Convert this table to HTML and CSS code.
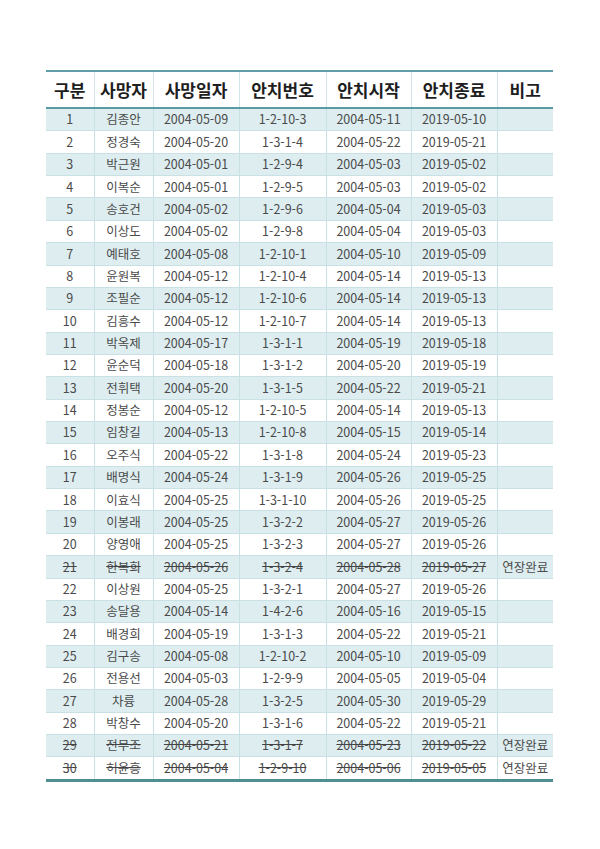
FILE: index.html
```html
<!DOCTYPE html>
<html lang="ko">
<head>
<meta charset="utf-8">
<link rel="stylesheet" href="styles.css">
</head>
<body>
<div class="page">
<table class="grid">
<colgroup>
<col class="c1"><col class="c2"><col class="c3"><col class="c4"><col class="c5"><col class="c6"><col class="c7">
</colgroup>
<thead>
<tr><th>구분</th><th>사망자</th><th>사망일자</th><th>안치번호</th><th>안치시작</th><th>안치종료</th><th>비고</th></tr>
</thead>
<tbody>
<tr><td>1</td><td>김종안</td><td>2004-05-09</td><td>1-2-10-3</td><td>2004-05-11</td><td>2019-05-10</td><td></td></tr>
<tr><td>2</td><td>정경숙</td><td>2004-05-20</td><td>1-3-1-4</td><td>2004-05-22</td><td>2019-05-21</td><td></td></tr>
<tr><td>3</td><td>박근원</td><td>2004-05-01</td><td>1-2-9-4</td><td>2004-05-03</td><td>2019-05-02</td><td></td></tr>
<tr><td>4</td><td>이복순</td><td>2004-05-01</td><td>1-2-9-5</td><td>2004-05-03</td><td>2019-05-02</td><td></td></tr>
<tr><td>5</td><td>송호건</td><td>2004-05-02</td><td>1-2-9-6</td><td>2004-05-04</td><td>2019-05-03</td><td></td></tr>
<tr><td>6</td><td>이상도</td><td>2004-05-02</td><td>1-2-9-8</td><td>2004-05-04</td><td>2019-05-03</td><td></td></tr>
<tr><td>7</td><td>예태호</td><td>2004-05-08</td><td>1-2-10-1</td><td>2004-05-10</td><td>2019-05-09</td><td></td></tr>
<tr><td>8</td><td>윤원복</td><td>2004-05-12</td><td>1-2-10-4</td><td>2004-05-14</td><td>2019-05-13</td><td></td></tr>
<tr><td>9</td><td>조필순</td><td>2004-05-12</td><td>1-2-10-6</td><td>2004-05-14</td><td>2019-05-13</td><td></td></tr>
<tr><td>10</td><td>김흥수</td><td>2004-05-12</td><td>1-2-10-7</td><td>2004-05-14</td><td>2019-05-13</td><td></td></tr>
<tr><td>11</td><td>박옥제</td><td>2004-05-17</td><td>1-3-1-1</td><td>2004-05-19</td><td>2019-05-18</td><td></td></tr>
<tr><td>12</td><td>윤순덕</td><td>2004-05-18</td><td>1-3-1-2</td><td>2004-05-20</td><td>2019-05-19</td><td></td></tr>
<tr><td>13</td><td>전휘택</td><td>2004-05-20</td><td>1-3-1-5</td><td>2004-05-22</td><td>2019-05-21</td><td></td></tr>
<tr><td>14</td><td>정봉순</td><td>2004-05-12</td><td>1-2-10-5</td><td>2004-05-14</td><td>2019-05-13</td><td></td></tr>
<tr><td>15</td><td>임창길</td><td>2004-05-13</td><td>1-2-10-8</td><td>2004-05-15</td><td>2019-05-14</td><td></td></tr>
<tr><td>16</td><td>오주식</td><td>2004-05-22</td><td>1-3-1-8</td><td>2004-05-24</td><td>2019-05-23</td><td></td></tr>
<tr><td>17</td><td>배명식</td><td>2004-05-24</td><td>1-3-1-9</td><td>2004-05-26</td><td>2019-05-25</td><td></td></tr>
<tr><td>18</td><td>이효식</td><td>2004-05-25</td><td>1-3-1-10</td><td>2004-05-26</td><td>2019-05-25</td><td></td></tr>
<tr><td>19</td><td>이봉래</td><td>2004-05-25</td><td>1-3-2-2</td><td>2004-05-27</td><td>2019-05-26</td><td></td></tr>
<tr><td>20</td><td>양영애</td><td>2004-05-25</td><td>1-3-2-3</td><td>2004-05-27</td><td>2019-05-26</td><td></td></tr>
<tr class="done"><td><s>21</s></td><td><s>한복희</s></td><td><s>2004-05-26</s></td><td><s>1-3-2-4</s></td><td><s>2004-05-28</s></td><td><s>2019-05-27</s></td><td>연장완료</td></tr>
<tr><td>22</td><td>이상원</td><td>2004-05-25</td><td>1-3-2-1</td><td>2004-05-27</td><td>2019-05-26</td><td></td></tr>
<tr><td>23</td><td>송달용</td><td>2004-05-14</td><td>1-4-2-6</td><td>2004-05-16</td><td>2019-05-15</td><td></td></tr>
<tr><td>24</td><td>배경희</td><td>2004-05-19</td><td>1-3-1-3</td><td>2004-05-22</td><td>2019-05-21</td><td></td></tr>
<tr><td>25</td><td>김구송</td><td>2004-05-08</td><td>1-2-10-2</td><td>2004-05-10</td><td>2019-05-09</td><td></td></tr>
<tr><td>26</td><td>전용선</td><td>2004-05-03</td><td>1-2-9-9</td><td>2004-05-05</td><td>2019-05-04</td><td></td></tr>
<tr><td>27</td><td>차륭</td><td>2004-05-28</td><td>1-3-2-5</td><td>2004-05-30</td><td>2019-05-29</td><td></td></tr>
<tr><td>28</td><td>박창수</td><td>2004-05-20</td><td>1-3-1-6</td><td>2004-05-22</td><td>2019-05-21</td><td></td></tr>
<tr class="done"><td><s>29</s></td><td><s>전무조</s></td><td><s>2004-05-21</s></td><td><s>1-3-1-7</s></td><td><s>2004-05-23</s></td><td><s>2019-05-22</s></td><td>연장완료</td></tr>
<tr class="done"><td><s>30</s></td><td><s>허윤흥</s></td><td><s>2004-05-04</s></td><td><s>1-2-9-10</s></td><td><s>2004-05-06</s></td><td><s>2019-05-05</s></td><td>연장완료</td></tr>
</tbody>
</table>
</div>
</body>
</html>
```

FILE: styles.css
```css
html, body {
  margin: 0;
  padding: 0;
  background: #ffffff;
}
.page {
  width: 600px;
  height: 849px;
  padding-top: 70px;
  padding-left: 46px;
  box-sizing: border-box;
}
.grid {
  border-collapse: collapse;
  table-layout: fixed;
  width: 507px;
  font-family: "Noto Sans CJK KR", "Noto Sans", sans-serif;
  color: #4a4a4a;
}
.c1 { width: 48px; }
.c2 { width: 59px; }
.c3 { width: 86px; }
.c4 { width: 87px; }
.c5 { width: 85px; }
.c6 { width: 86px; }
.c7 { width: 56px; }
.grid th {
  height: 35px;
  font-size: 17px;
  font-weight: 700;
  color: #1e1e1e;
  border-top: 2px solid #5f9ea6;
  border-bottom: 2px solid #5a9aa2;
  border-left: 1px solid #d2e6ea;
  border-right: 1px solid #d2e6ea;
  padding: 0;
  line-height: 1;
}
.grid td {
  height: 21.37px;
  font-size: 12.5px;
  text-align: center;
  padding: 0;
  line-height: 1;
  border: 1px solid #c9e0e4;
  white-space: nowrap;
}
.grid th:first-child, .grid td:first-child { border-left: none; }
.grid th:last-child, .grid td:last-child { border-right: none; }
.grid tbody tr:nth-child(odd) td { background: #ddedf0; }
.grid tbody tr:last-child td { border-bottom: 3px solid #4f8f92; }
.grid s { text-decoration: line-through; text-decoration-color: #444; }
```
